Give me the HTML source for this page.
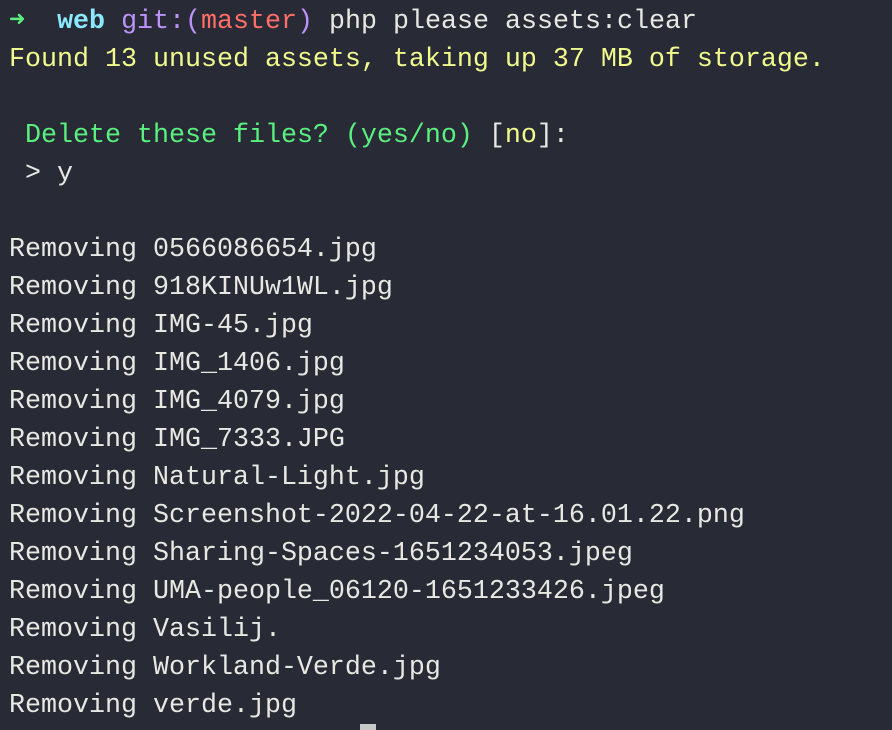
<!DOCTYPE html>
<html><head><style>
html,body{margin:0;padding:0;background:#282a36;width:892px;height:730px;overflow:hidden}
pre{position:absolute;left:9px;top:3px;margin:0;font-family:"Liberation Mono",monospace;font-size:26.67px;line-height:38px;color:#e8e8e2}
.g{color:#5af07f}.c{color:#8be9fd;font-weight:bold}.p{color:#bd93f9}.r{color:#ff6e67}.y{color:#f1fa8c}
.cur{position:absolute;left:360px;top:724px;width:16px;height:6px;background:#c8c8c8}
</style></head><body>
<pre><span class="g"><b>➜</b></span>  <span class="c">web</span> <span class="p">git:(</span><span class="r">master</span><span class="p">)</span> php please assets:clear
<span class="y">Found 13 unused assets, taking up 37 MB of storage.</span>

 <span class="g">Delete these files? (yes/no)</span> [<span class="y">no</span>]:
 &gt; y

Removing 0566086654.jpg
Removing 918KINUw1WL.jpg
Removing IMG-45.jpg
Removing IMG_1406.jpg
Removing IMG_4079.jpg
Removing IMG_7333.JPG
Removing Natural-Light.jpg
Removing Screenshot-2022-04-22-at-16.01.22.png
Removing Sharing-Spaces-1651234053.jpeg
Removing UMA-people_06120-1651233426.jpeg
Removing Vasilij.
Removing Workland-Verde.jpg
Removing verde.jpg</pre>
<div class="cur"></div>
</body></html>
